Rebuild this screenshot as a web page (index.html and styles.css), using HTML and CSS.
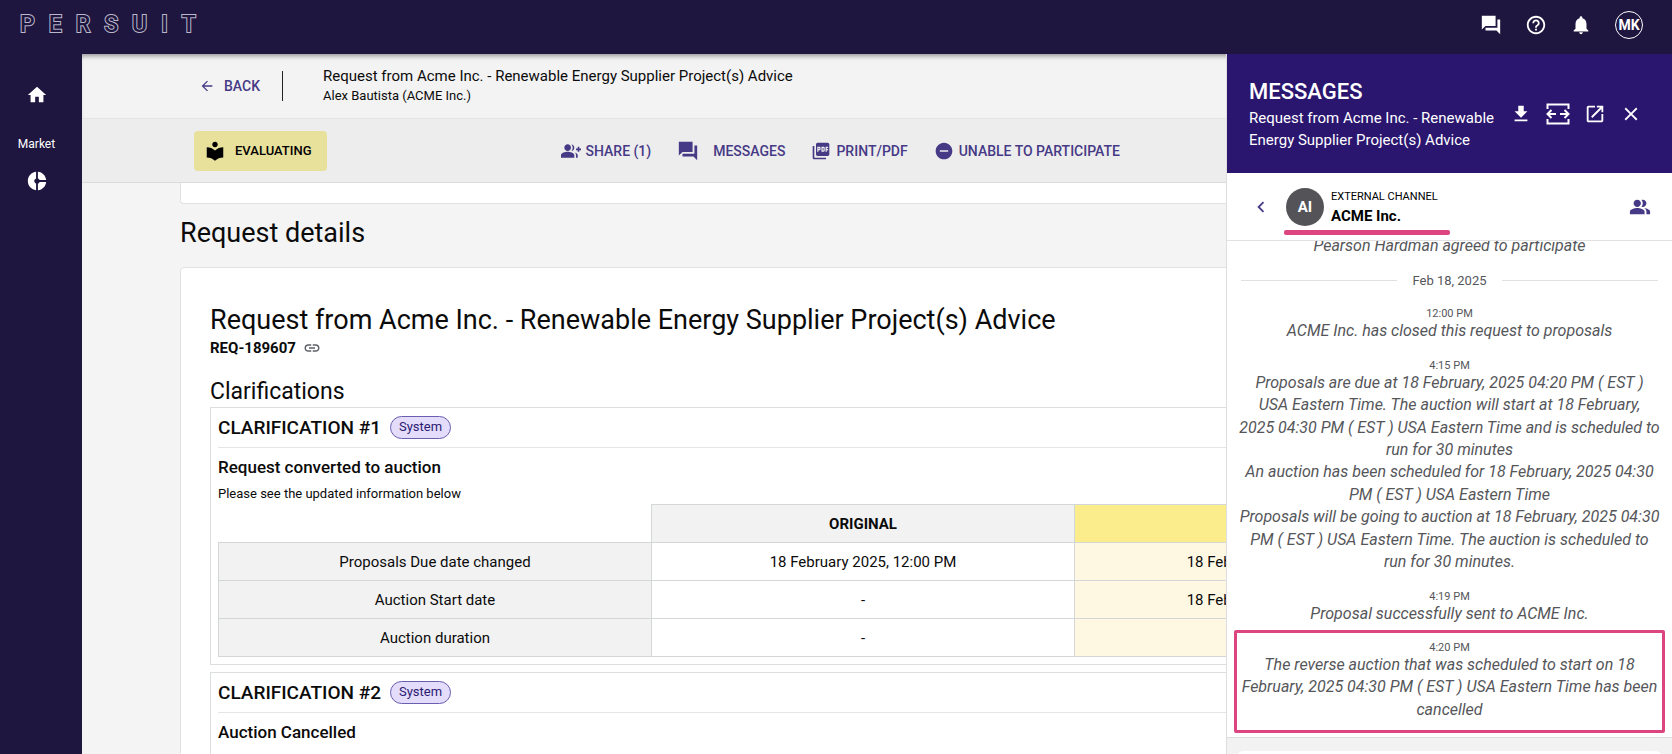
FILE: index.html
```html
<!DOCTYPE html>
<html lang="en">
<head>
    <meta charset="UTF-8">
    <meta name="viewport" content="width=device-width, initial-scale=1.0">
    <title>Request from Acme Inc. - PERSUIT</title>
    <link rel="stylesheet" href="styles.css">
</head>
<body>

<!-- Top bar -->
<header class="topbar">
    <a href="#" class="logo" aria-label="Persuit">
        <span>P</span><span>E</span><span>R</span><span>S</span><span>U</span><span>I</span><span>T</span>
    </a>
    <div class="topbar-actions">
        <button type="button" class="icon-button" aria-label="Messages">
            <svg class="icon" viewBox="0 0 24 24"><path d="M22 6h-3v9H6v3h12l4 4V6zm-5 7V2H2v15l4-4h11z"/></svg>
        </button>
        <button type="button" class="icon-button" aria-label="Help">
            <svg class="icon" viewBox="0 0 24 24"><path d="M11 18h2v-2h-2v2zm1-16C6.48 2 2 6.48 2 12s4.48 10 10 10 10-4.48 10-10S17.52 2 12 2zm0 18c-4.41 0-8-3.59-8-8s3.59-8 8-8 8 3.59 8 8-3.59 8-8 8zm0-14c-2.21 0-4 1.79-4 4h2c0-1.1.9-2 2-2s2 .9 2 2c0 2-3 1.75-3 5h2c0-2.25 3-2.5 3-5 0-2.21-1.79-4-4-4z"/></svg>
        </button>
        <button type="button" class="icon-button" aria-label="Notifications">
            <svg class="icon" viewBox="0 0 24 24"><path d="M12 22c1.1 0 2-.9 2-2h-4c0 1.1.89 2 2 2zm6-6v-5c0-3.07-1.64-5.64-4.5-6.32V4c0-.83-.67-1.5-1.5-1.5s-1.5.67-1.5 1.5v.68C7.63 5.36 6 7.92 6 11v5l-2 2v1h16v-1l-2-2z"/></svg>
        </button>
        <button type="button" class="user-button">MK</button>
    </div>
</header>

<div class="shell">
    <!-- Sidebar -->
    <nav class="sidebar">
        <a href="#" aria-label="Home">
            <svg class="icon" viewBox="0 0 24 24"><path d="M10 20v-6h4v6h5v-8h3L12 3 2 12h3v8z"/></svg>
        </a>
        <span class="sidebar-label">Market</span>
        <a href="#" aria-label="Market insights">
            <svg class="icon" viewBox="0 0 24 24"><path d="M11 9.16V2c-5 .5-9 4.79-9 10s4 9.5 9 10v-7.16c-1-.41-2-1.52-2-2.84s1-2.43 2-2.84zM14.86 11H22c-.48-4.75-4-8.53-9-9v7.16c1 .3 1.52.98 1.86 1.84zM13 14.84V22c5-.47 8.52-4.25 9-9h-7.14c-.34.86-.86 1.54-1.86 1.84z"/></svg>
        </a>
    </nav>

    <main class="main">
        <div class="page-header">
            <a href="#" class="back">
                <svg class="icon" viewBox="0 0 24 24"><path d="M20 11H7.83l5.59-5.59L12 4l-8 8 8 8 1.41-1.41L7.83 13H20v-2z"/></svg>
                BACK
            </a>
            <div class="page-title">
                <p class="page-name">Request from Acme Inc. - Renewable Energy Supplier Project(s) Advice</p>
                <p class="page-owner">Alex Bautista (ACME Inc.)</p>
            </div>
        </div>

        <div class="toolbar">
            <span class="status">
                <svg class="icon" viewBox="0 0 24 24"><path d="M12 11.55C9.64 9.35 6.48 8 3 8v11c3.48 0 6.64 1.35 9 3.55 2.36-2.19 5.52-3.55 9-3.55V8c-3.48 0-6.64 1.35-9 3.55zM12 8c1.66 0 3-1.34 3-3s-1.34-3-3-3-3 1.34-3 3 1.34 3 3 3z"/></svg>
                EVALUATING
            </span>
            <div class="toolbar-actions">
                <button type="button">
                    <svg class="icon" viewBox="0 0 24 24"><path d="M22 9V7h-2v2h-2v2h2v2h2v-2h2V9h-2zM8 12c2.21 0 4-1.79 4-4s-1.79-4-4-4-4 1.79-4 4 1.79 4 4 4zm0 1c-2.67 0-8 1.34-8 4v3h16v-3c0-2.66-5.33-4-8-4zM12.51 4.05C13.43 5.11 14 6.49 14 8s-.57 2.89-1.49 3.95C14.47 11.7 16 10.04 16 8s-1.53-3.7-3.49-3.95zM16.53 13.83C17.42 14.66 18 15.7 18 17v3h2v-3c0-1.45-1.59-2.51-3.47-3.17z"/></svg>
                    SHARE (1)
                </button>
                <button type="button" class="action-messages">
                    <svg class="icon" viewBox="0 0 24 24"><path d="M22 6h-3v9H6v3h12l4 4V6zm-5 7V2H2v15l4-4h11z"/></svg>
                    MESSAGES
                </button>
                <button type="button">
                    <svg class="icon" viewBox="0 0 24 24"><path d="M20 2H8c-1.1 0-2 .9-2 2v12c0 1.1.9 2 2 2h12c1.1 0 2-.9 2-2V4c0-1.1-.9-2-2-2zm-8.5 7.5c0 .83-.67 1.5-1.5 1.5H9v2H7.5V7H10c.83 0 1.5.67 1.5 1.5v1zm5 2c0 .83-.67 1.5-1.5 1.5h-2.5V7H15c.83 0 1.5.67 1.5 1.5v3zm4-3H19v1h1.5V11H19v2h-1.5V7h3v1.5zM9 9.5h1v-1H9v1zM4 6H2v14c0 1.1.9 2 2 2h14v-2H4V6zm10 5.5h1v-3h-1v3z"/></svg>
                    PRINT/PDF
                </button>
                <button type="button">
                    <svg class="icon" viewBox="0 0 24 24"><path d="M12 2C6.48 2 2 6.48 2 12s4.48 10 10 10 10-4.48 10-10S17.52 2 12 2zm5 11H7v-2h10v2z"/></svg>
                    UNABLE TO PARTICIPATE
                </button>
            </div>
        </div>

        <div class="content">
            <div class="card card-previous"></div>
            <h2 class="section-title">Request details</h2>

            <div class="card card-details">
                <h1>Request from Acme Inc. - Renewable Energy Supplier Project(s) Advice</h1>
                <p class="request-id">
                    REQ-189607
                    <a href="#" aria-label="Copy link">
                        <svg class="icon" viewBox="0 0 24 24"><path d="M3.9 12c0-1.71 1.39-3.1 3.1-3.1h4V7H7c-2.76 0-5 2.24-5 5s2.24 5 5 5h4v-1.9H7c-1.71 0-3.1-1.39-3.1-3.1zM8 13h8v-2H8v2zm9-6h-4v1.9h4c1.71 0 3.1 1.39 3.1 3.1s-1.39 3.1-3.1 3.1h-4V17h4c2.76 0 5-2.24 5-5s-2.24-5-5-5z"/></svg>
                    </a>
                </p>

                <h2 class="clarifications-title">Clarifications</h2>

                <section class="clarification">
                    <div class="clarification-header">
                        <h3>CLARIFICATION #1</h3>
                        <span class="badge">System</span>
                    </div>
                    <h4>Request converted to auction</h4>
                    <p class="clarification-text">Please see the updated information below</p>
                    <table class="changes">
                        <thead>
                            <tr>
                                <td class="col-field"></td>
                                <th scope="col" class="col-original">ORIGINAL</th>
                                <th scope="col" class="updated"></th>
                            </tr>
                        </thead>
                        <tbody>
                            <tr>
                                <th scope="row">Proposals Due date changed</th>
                                <td>18 February 2025, 12:00 PM</td>
                                <td class="updated">18 February 2025, 04:20 PM</td>
                            </tr>
                            <tr>
                                <th scope="row">Auction Start date</th>
                                <td>-</td>
                                <td class="updated">18 February 2025, 04:30 PM</td>
                            </tr>
                            <tr>
                                <th scope="row">Auction duration</th>
                                <td>-</td>
                                <td class="updated"></td>
                            </tr>
                        </tbody>
                    </table>
                </section>

                <section class="clarification">
                    <div class="clarification-header">
                        <h3>CLARIFICATION #2</h3>
                        <span class="badge">System</span>
                    </div>
                    <h4>Auction Cancelled</h4>
                </section>
            </div>
        </div>
    </main>

    <!-- Messages drawer -->
    <aside class="drawer">
        <div class="drawer-header">
            <div class="drawer-title">
                <h2>MESSAGES</h2>
                <p>Request from Acme Inc. - Renewable Energy Supplier Project(s) Advice</p>
            </div>
            <div class="drawer-actions">
                <button type="button" class="icon-button" aria-label="Download">
                    <svg class="icon" viewBox="0 0 24 24"><path d="M19 9h-4V3H9v6H5l7 7 7-7zM5 18v2h14v-2H5z"/></svg>
                </button>
                <button type="button" class="icon-button" aria-label="Expand">
                    <svg class="icon icon-expand" viewBox="0 0 24 24"><path d="M1.5 7V2.5h21V7M1.5 17v4.5h21V17M10 12H2M5.5 8l-4 4 4 4M14 12h8M18.5 8l4 4-4 4"/></svg>
                </button>
                <button type="button" class="icon-button" aria-label="Open in new window">
                    <svg class="icon" viewBox="0 0 24 24"><path d="M19 19H5V5h7V3H5c-1.11 0-2 .9-2 2v14c0 1.1.89 2 2 2h14c1.1 0 2-.9 2-2v-7h-2v7zM14 3v2h3.59l-9.83 9.83 1.41 1.41L19 6.41V10h2V3h-7z"/></svg>
                </button>
                <button type="button" class="icon-button" aria-label="Close">
                    <svg class="icon" viewBox="0 0 24 24"><path d="M19 6.41 17.59 5 12 10.59 6.41 5 5 6.41 10.59 12 5 17.59 6.41 19 12 13.41 17.59 19 19 17.59 13.41 12z"/></svg>
                </button>
            </div>
        </div>

        <div class="channel">
            <button type="button" class="icon-button" aria-label="Back to channels">
                <svg class="icon" viewBox="0 0 24 24"><path d="M15.41 7.41 14 6l-6 6 6 6 1.41-1.41L10.83 12z"/></svg>
            </button>
            <div class="channel-info">
                <span class="avatar">AI</span>
                <div>
                    <p class="channel-type">EXTERNAL CHANNEL</p>
                    <p class="channel-name">ACME Inc.</p>
                </div>
            </div>
            <button type="button" class="icon-button channel-members" aria-label="Members">
                <svg class="icon" viewBox="0 0 24 24"><path d="M16.67 13.13C18.04 14.06 19 15.32 19 17v3h4v-3c0-2.18-3.57-3.47-6.33-3.87zM15 12c2.21 0 4-1.79 4-4s-1.79-4-4-4c-.47 0-.91.1-1.33.24C14.5 5.27 15 6.58 15 8s-.5 2.73-1.33 3.76c.42.14.86.24 1.33.24zM9 12c2.21 0 4-1.79 4-4s-1.79-4-4-4-4 1.79-4 4 1.79 4 4 4zm0 1c-2.67 0-8 1.34-8 4v3h16v-3c0-2.66-5.33-4-8-4z"/></svg>
            </button>
        </div>

        <div class="messages">
            <div class="message">
                <p>Pearson Hardman agreed to participate</p>
            </div>
            <div class="day">Feb 18, 2025</div>
            <div class="message">
                <time>12:00 PM</time>
                <p>ACME Inc. has closed this request to proposals</p>
            </div>
            <div class="message">
                <time>4:15 PM</time>
                <p>Proposals are due at 18 February, 2025 04:20 PM ( EST )<br>
                USA Eastern Time. The auction will start at 18 February,<br>
                2025 04:30 PM ( EST ) USA Eastern Time and is scheduled to run for 30 minutes</p>
                <p>An auction has been scheduled for 18 February, 2025 04:30 PM ( EST ) USA Eastern Time</p>
                <p>Proposals will be going to auction at 18 February, 2025 04:30 PM ( EST ) USA Eastern Time. The auction is scheduled to<br>
                run for 30 minutes.</p>
            </div>
            <div class="message">
                <time>4:19 PM</time>
                <p>Proposal successfully sent to ACME Inc.</p>
            </div>
            <div class="message message-highlight">
                <time>4:20 PM</time>
                <p>The reverse auction that was scheduled to start on 18<br>
                February, 2025 04:30 PM ( EST ) USA Eastern Time has been cancelled</p>
            </div>
        </div>

        <div class="composer">
            <textarea aria-label="Message"></textarea>
        </div>
    </aside>
</div>

</body>
</html>
```
FILE: styles.css
```css
* {
    margin: 0;
    padding: 0;
    box-sizing: border-box;
}

body {
    font-family: Roboto, Arial, sans-serif;
    font-size: 15px;
    color: #0b0b0b;
    background-color: #f4f4f4;
    display: flex;
    flex-direction: column;
    height: 100vh;
    overflow: hidden;
}

a {
    color: inherit;
    text-decoration: none;
}

button {
    font: inherit;
    color: inherit;
    background: none;
    border: none;
    cursor: pointer;
}

.icon {
    display: block;
    width: 22px;
    height: 22px;
    fill: currentColor;
    flex-shrink: 0;
}

.icon-button {
    display: flex;
    align-items: center;
    justify-content: center;
}

/* Top bar */
.topbar {
    display: flex;
    align-items: center;
    justify-content: space-between;
    height: 54px;
    padding: 0 29px 4px 20px;
    background-color: #1e163f;
    color: #fff;
    flex-shrink: 0;
}

.logo {
    display: flex;
    gap: 14px;
    font-size: 23px;
    font-weight: 500;
    line-height: 28px;
    color: #1e163f;
    -webkit-text-stroke: 2px #bcb8cc;
    paint-order: stroke fill;
}

.topbar-actions {
    display: flex;
    align-items: center;
    gap: 23px;
}

.user-button {
    width: 28px;
    height: 28px;
    border: 1px solid #fff;
    border-radius: 50%;
    font-size: 14px;
    font-weight: 700;
}

/* Shell */
.shell {
    display: flex;
    flex: 1;
    min-height: 0;
}

.sidebar {
    display: flex;
    flex-direction: column;
    align-items: center;
    width: 82px;
    padding: 30px 9px 0 0;
    background-color: #1e163f;
    color: #fff;
    flex-shrink: 0;
}

.sidebar-label {
    font-size: 12px;
    line-height: 16px;
    margin: 30px 0 18px;
}

/* The page keeps its full width, the open drawer cuts it off */
.main {
    display: flex;
    flex-direction: column;
    flex: 1;
    min-width: 0;
    overflow: hidden;
}

.page-header,
.toolbar,
.content {
    width: calc(100vw - 82px);
}

.page-header {
    display: flex;
    align-items: center;
    height: 65px;
    padding: 0 117px;
    background-color: #f3f3f3;
    border-bottom: 1px solid #e4e4e4;
    box-shadow: inset 0 5px 5px -3px rgba(0, 0, 0, 0.4);
    flex-shrink: 0;
}

.back {
    display: flex;
    align-items: center;
    gap: 9px;
    padding-right: 22px;
    border-right: 1px solid #222;
    font-size: 14px;
    font-weight: 500;
    line-height: 30px;
    color: #463a86;
}

.back .icon {
    width: 16px;
    height: 16px;
}

.page-title {
    padding-left: 40px;
}

.page-name {
    line-height: 20px;
}

.page-owner {
    font-size: 13px;
    line-height: 20px;
}

.toolbar {
    display: flex;
    align-items: center;
    gap: 234px;
    height: 64px;
    padding: 0 112px;
    background-color: #ededed;
    border-bottom: 1px solid #dcdcdc;
    white-space: nowrap;
    flex-shrink: 0;
}

.status {
    display: flex;
    align-items: center;
    gap: 9px;
    height: 40px;
    padding: 0 15px 0 10px;
    border-radius: 4px;
    background-color: #e8e19b;
    color: #000;
    font-size: 13px;
    font-weight: 500;
}

.toolbar-actions {
    display: flex;
    align-items: center;
    gap: 26px;
    color: #463a86;
    font-size: 14px;
    font-weight: 500;
}

.toolbar-actions button {
    display: flex;
    align-items: center;
    gap: 5px;
}

.toolbar-actions .icon {
    width: 20px;
    height: 20px;
}

.toolbar-actions .action-messages {
    gap: 14px;
}

.toolbar-actions .action-messages .icon {
    width: 22px;
    height: 22px;
}

/* Content */
.content {
    flex: 1;
    min-height: 0;
    overflow: hidden;
    padding: 0 148px 0 98px;
}

.card {
    background-color: #fff;
    border: 1px solid #e2e2e2;
    border-radius: 4px;
}

.card-previous {
    height: 21px;
    border-top: none;
    border-radius: 0 0 4px 4px;
}

.section-title {
    font-size: 27px;
    font-weight: 400;
    line-height: 32px;
    padding: 13px 0 18px;
}

.card-details {
    padding: 36px 29px;
}

.card-details h1 {
    font-size: 27px;
    font-weight: 400;
    line-height: 32px;
}

.request-id {
    display: flex;
    align-items: center;
    gap: 7px;
    font-weight: 700;
    line-height: 24px;
}

.request-id .icon {
    width: 18px;
    height: 18px;
    color: #5f5f68;
}

.clarifications-title {
    font-size: 23px;
    font-weight: 400;
    line-height: 28px;
    padding: 18px 0 1px;
}

.clarification {
    min-height: 160px;
    padding: 0 7px 7px;
    border: 1px solid #dcdfdf;
    margin-bottom: 7px;
}

.clarification-header {
    display: flex;
    align-items: center;
    gap: 9px;
    height: 40px;
    border-bottom: 1px solid #e6e6e6;
}

.clarification h3 {
    font-size: 19px;
    font-weight: 500;
}

.badge {
    height: 23px;
    padding: 0 8px;
    border: 1px solid #6a5fae;
    border-radius: 12px;
    background-color: #e3dcfb;
    color: #2c1a73;
    font-size: 13px;
    line-height: 20px;
}

.clarification h4 {
    font-size: 17px;
    font-weight: 500;
    line-height: 24px;
    padding-top: 7px;
}

.clarification-text {
    font-size: 13px;
    line-height: 18px;
    padding: 6px 0 1px;
}

.changes {
    width: 100%;
    table-layout: fixed;
    border-collapse: collapse;
    text-align: center;
    white-space: nowrap;
}

.changes th,
.changes td {
    height: 38px;
    border: 1px solid #d3d7d7;
}

.changes th {
    background-color: #f2f2f2;
}

.changes tbody th {
    font-weight: 400;
}

.changes .col-field {
    width: 433px;
    border-top: none;
    border-left: none;
}

.changes .col-original {
    width: 423px;
}

.changes td.updated {
    background-color: #fef8e3;
}

.changes th.updated {
    background-color: #fbec8c;
}

/* Messages drawer */
.drawer {
    display: flex;
    flex-direction: column;
    width: 446px;
    background-color: #fff;
    border-left: 1px solid #dedede;
    flex-shrink: 0;
}

.drawer-header {
    display: flex;
    align-items: center;
    justify-content: space-between;
    height: 119px;
    padding: 0 30px 0 22px;
    background-color: #2a156f;
    color: #fff;
    flex-shrink: 0;
}

.drawer-title {
    width: 254px;
}

.drawer-title h2 {
    font-size: 22px;
    font-weight: 500;
    line-height: 30px;
}

.drawer-title p {
    line-height: 22px;
}

.drawer-actions {
    display: flex;
    align-items: center;
    gap: 14px;
}

.icon-expand {
    width: 24px;
    height: 24px;
    fill: none;
    stroke: currentColor;
    stroke-width: 2px;
}

.channel {
    display: flex;
    align-items: center;
    height: 68px;
    padding: 0 21px 0 23px;
    border-bottom: 1px solid #e2e2e2;
    flex-shrink: 0;
}

.channel .icon-button {
    color: #463a86;
}

.channel-info {
    position: relative;
    display: flex;
    align-items: center;
    gap: 7px;
    margin-left: 14px;
    color: #000;
}

/* Accent under the active channel */
.channel-info::after {
    content: "";
    position: absolute;
    left: -2px;
    top: 42px;
    width: 166px;
    height: 5px;
    border-radius: 2px;
    background-color: #dc457f;
}

.avatar {
    width: 38px;
    height: 38px;
    border-radius: 50%;
    background-color: #545358;
    color: #fff;
    font-weight: 700;
    line-height: 38px;
    text-align: center;
}

.channel-type {
    font-size: 11px;
    line-height: 18px;
}

.channel-name {
    font-weight: 700;
    line-height: 20px;
}

.channel-members {
    margin-left: auto;
}

.messages {
    display: flex;
    flex-direction: column;
    justify-content: flex-end;
    flex: 1;
    min-height: 0;
    overflow: hidden;
    padding: 0 7px 4px;
    color: #55565a;
    text-align: center;
}

.message {
    flex-shrink: 0;
    padding-bottom: 18px;
}

.message time {
    display: block;
    font-size: 11px;
    line-height: 12px;
}

.message p {
    font-size: 16px;
    font-style: italic;
    line-height: 1.4;
}

.message-highlight {
    margin-top: -14px;
    padding: 9px 0;
    border: 3px solid #dc457f;
    border-radius: 2px;
}

.day {
    display: flex;
    align-items: center;
    gap: 15px;
    margin-top: -4px;
    padding: 0 7px 18px;
    font-size: 13px;
    line-height: 18px;
    flex-shrink: 0;
}

.day::before,
.day::after {
    content: "";
    flex: 1;
    height: 1px;
    background-color: #e0e0e0;
}

.composer {
    height: 17px;
    padding: 13px 9px 0;
    overflow: hidden;
    background-color: #f2f2f2;
    border-top: 1px solid #dcdcdc;
    flex-shrink: 0;
}

.composer textarea {
    display: block;
    width: 100%;
    height: 40px;
    border: none;
    border-radius: 8px;
    background-color: #fff;
    resize: none;
}
```
